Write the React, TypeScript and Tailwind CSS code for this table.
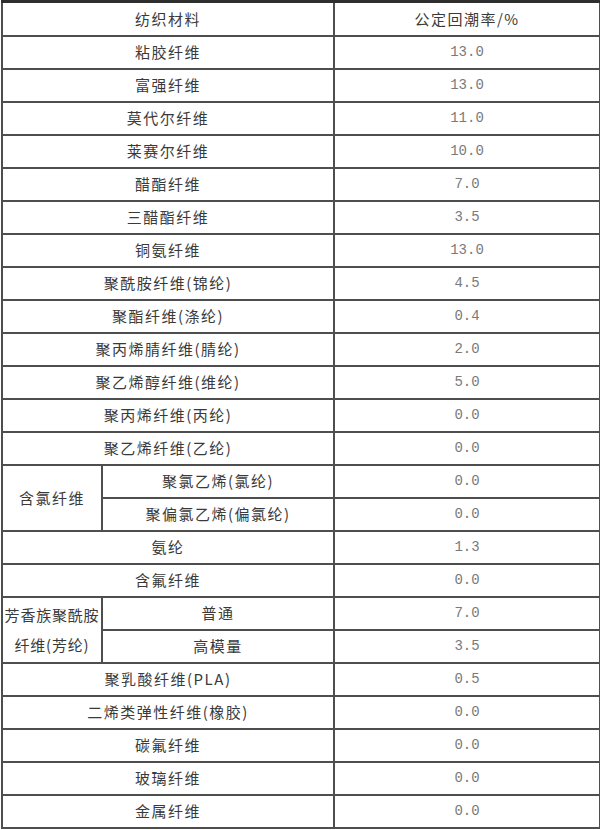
const rows: { name: string; value: string }[] = [
  { name: "粘胶纤维", value: "13.0" },
  { name: "富强纤维", value: "13.0" },
  { name: "莫代尔纤维", value: "11.0" },
  { name: "莱赛尔纤维", value: "10.0" },
  { name: "醋酯纤维", value: "7.0" },
  { name: "三醋酯纤维", value: "3.5" },
  { name: "铜氨纤维", value: "13.0" },
  { name: "聚酰胺纤维(锦纶)", value: "4.5" },
  { name: "聚酯纤维(涤纶)", value: "0.4" },
  { name: "聚丙烯腈纤维(腈纶)", value: "2.0" },
  { name: "聚乙烯醇纤维(维纶)", value: "5.0" },
  { name: "聚丙烯纤维(丙纶)", value: "0.0" },
  { name: "聚乙烯纤维(乙纶)", value: "0.0" },
];

const tail: { name: string; value: string }[] = [
  { name: "聚乳酸纤维(PLA)", value: "0.5" },
  { name: "二烯类弹性纤维(橡胶)", value: "0.0" },
  { name: "碳氟纤维", value: "0.0" },
  { name: "玻璃纤维", value: "0.0" },
  { name: "金属纤维", value: "0.0" },
];

const cell = "border-2 border-[#4e4e4e] text-center align-middle p-0 leading-[20px] whitespace-nowrap";
const cn = "text-[15px] tracking-[1.5px] text-[#3a3a3a]";
const num = "text-[14px] text-[#7a7a7a] font-['Liberation_Mono',monospace]";

function NameRow({ name, value }: { name: string; value: string }) {
  return (
    <tr className="h-[33px]">
      <td colSpan={2} className={`${cell} ${cn}`}>
        {name}
      </td>
      <td className={`${cell} ${num}`}>{value}</td>
    </tr>
  );
}

export default function App() {
  return (
    <div className="h-[830px] w-[600px] overflow-hidden bg-white pl-[1px] font-['Noto_Sans_CJK_SC','Noto_Sans',sans-serif]">
      <table className="w-[598px] table-fixed border-collapse">
        <colgroup>
          <col className="w-[100px]" />
          <col className="w-[232px]" />
          <col className="w-[266px]" />
        </colgroup>
        <tbody>
          <tr className="h-[34px]">
            <td colSpan={2} className={`${cell} border-t-[3px] border-t-[#2e2e2e] ${cn}`}>
              纺织材料
            </td>
            <td className={`${cell} border-t-[3px] border-t-[#2e2e2e] ${cn}`}>
              公定回潮率/%
            </td>
          </tr>
          {rows.map((r) => (
            <NameRow key={r.name} {...r} />
          ))}
          <tr className="h-[33px]">
            <td rowSpan={2} className={`${cell} ${cn}`}>
              含氯纤维
            </td>
            <td className={`${cell} ${cn}`}>聚氯乙烯(氯纶)</td>
            <td className={`${cell} ${num}`}>0.0</td>
          </tr>
          <tr className="h-[33px]">
            <td className={`${cell} ${cn}`}>聚偏氯乙烯(偏氯纶)</td>
            <td className={`${cell} ${num}`}>0.0</td>
          </tr>
          <NameRow name="氨纶" value="1.3" />
          <NameRow name="含氟纤维" value="0.0" />
          <tr className="h-[33px]">
            <td rowSpan={2} className={`${cell} ${cn} !leading-[30px] !tracking-[0.8px]`}>
              芳香族聚酰胺
              <br />
              纤维(芳纶)
            </td>
            <td className={`${cell} ${cn}`}>普通</td>
            <td className={`${cell} ${num}`}>7.0</td>
          </tr>
          <tr className="h-[33px]">
            <td className={`${cell} ${cn}`}>高模量</td>
            <td className={`${cell} ${num}`}>3.5</td>
          </tr>
          {tail.map((r) => (
            <NameRow key={r.name} {...r} />
          ))}
        </tbody>
      </table>
    </div>
  );
}
